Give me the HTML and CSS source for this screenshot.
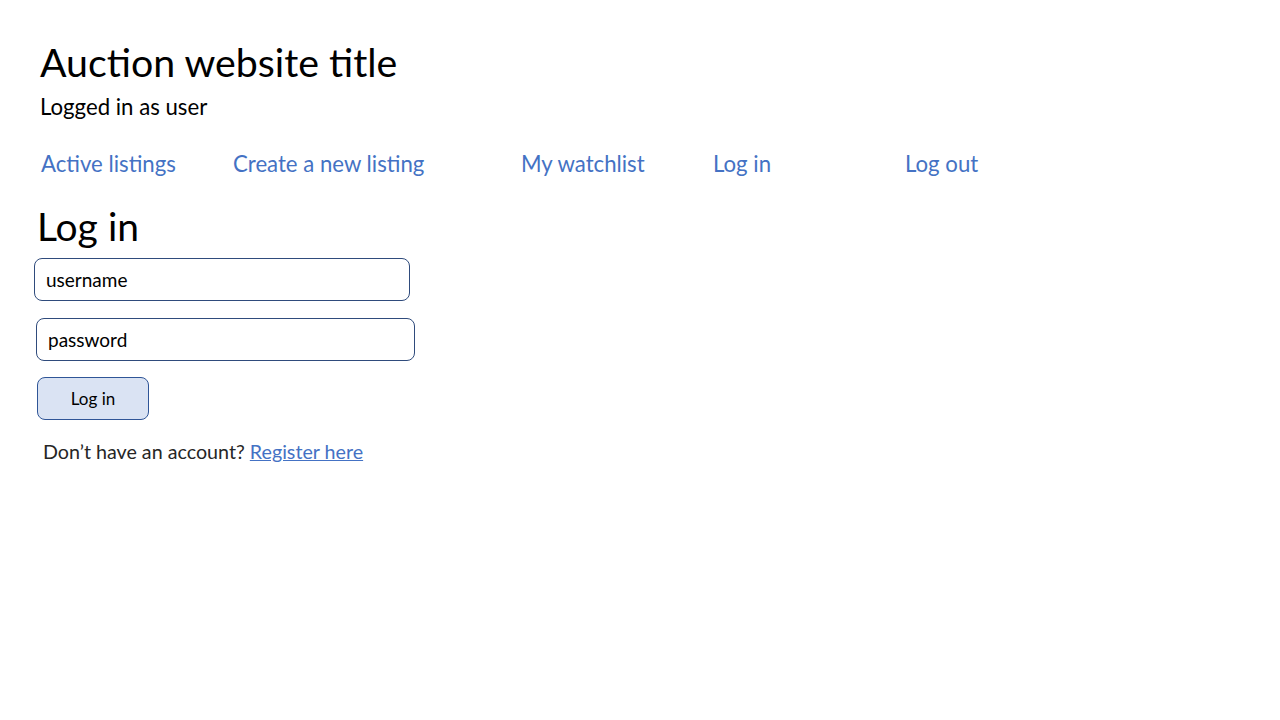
FILE: index.html
```html
<!DOCTYPE html>
<html>
<head>
<meta charset="utf-8">
<link rel="stylesheet" href="styles.css">
</head>
<body>
<div class="page">
  <header class="header">
    <h1 class="site-title">Auction website title</h1>
    <div class="user-line">Logged in as user</div>
  </header>
  <nav class="nav">
    <a class="nav-link w1" href="#">Active listings</a>
    <a class="nav-link w2" href="#">Create a new listing</a>
    <a class="nav-link w1" href="#">My watchlist</a>
    <a class="nav-link w1" href="#">Log in</a>
    <a class="nav-link" href="#">Log out</a>
  </nav>
  <main class="login">
    <h2 class="login-title">Log in</h2>
    <div class="field field-user">username</div>
    <div class="field field-pass">password</div>
    <div class="btn">Log in</div>
    <p class="register">Don’t have an account? <a class="register-link" href="#">Register here</a></p>
  </main>
</div>
</body>
</html>
```
FILE: styles.css
```css
* { box-sizing: border-box; }
html, body { margin: 0; padding: 0; background: #fff; }
body { font-family: Lato, "Open Sans", sans-serif; color: #000; }
.page { padding: 38px 0 0 40px; }
.header { display: flex; flex-direction: column; }
.site-title { margin: 0; font-weight: 400; font-size: 39.3px; line-height: 48px; }
.user-line { font-size: 22.2px; line-height: 26px; margin-top: 8px; }
.nav { display: flex; margin-top: 29px; padding-left: 1px; }
.nav-link { color: #4472c4; text-decoration: none; font-size: 22.2px; line-height: 30px; }
.w1 { width: 192px; }
.w2 { width: 288px; }
.login { display: flex; flex-direction: column; align-items: flex-start; margin-top: 24px; margin-left: -3px; }
.login-title { margin: 0; font-weight: 400; font-size: 39px; line-height: 46px; }
.field { border: 1px solid #2f4b7c; border-radius: 8px; height: 43px; font-size: 19px; line-height: 41px; padding-left: 11px; }
.field-user { width: 376px; margin-top: 9px; margin-left: -3px; }
.field-pass { width: 379px; margin-top: 17px; margin-left: -1px; }
.btn { width: 112px; height: 43px; margin-top: 16px; background: #dae3f3; border: 1px solid #2f5597; border-radius: 8px; font-size: 17px; line-height: 41px; text-align: center; }
.register { margin: 18px 0 0 6px; font-size: 19.7px; line-height: 28px; color: #262626; }
.register-link { color: #4472c4; text-decoration: underline; }
```
